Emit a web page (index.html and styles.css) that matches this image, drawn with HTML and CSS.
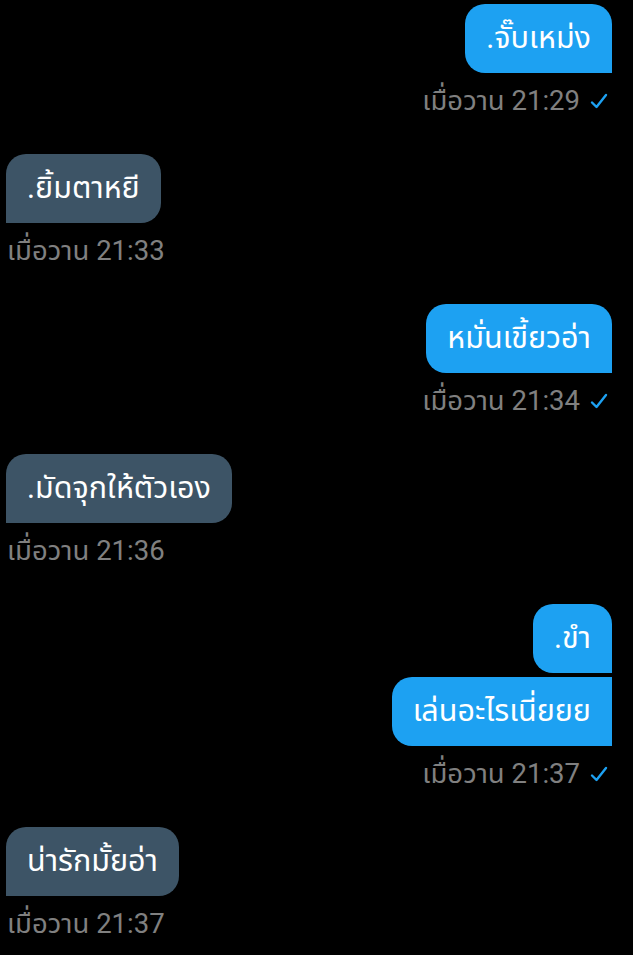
FILE: index.html
```html
<!DOCTYPE html>
<html lang="th">
<head>
<meta charset="utf-8">
<link rel="stylesheet" href="styles.css">
</head>
<body>
<div class="chat">
  <div class="group out">
    <div class="bubble last">.จั๊บเหม่ง</div>
    <div class="meta">เมื่อวาน 21:29 <svg class="check" viewBox="0 0 18 18"><path d="M2 10.5 L6.5 15 L16 3" /></svg></div>
  </div>
  <div class="group in">
    <div class="bubble last">.ยิ้มตาหยี</div>
    <div class="meta">เมื่อวาน 21:33</div>
  </div>
  <div class="group out">
    <div class="bubble last">หมั่นเขี้ยวอ่า</div>
    <div class="meta">เมื่อวาน 21:34 <svg class="check" viewBox="0 0 18 18"><path d="M2 10.5 L6.5 15 L16 3" /></svg></div>
  </div>
  <div class="group in">
    <div class="bubble last">.มัดจุกให้ตัวเอง</div>
    <div class="meta">เมื่อวาน 21:36</div>
  </div>
  <div class="group out">
    <div class="bubble first">.ขำ</div>
    <div class="bubble mid">เล่นอะไรเนี่ยยย</div>
    <div class="meta">เมื่อวาน 21:37 <svg class="check" viewBox="0 0 18 18"><path d="M2 10.5 L6.5 15 L16 3" /></svg></div>
  </div>
  <div class="group in">
    <div class="bubble last">น่ารักมั้ยอ่า</div>
    <div class="meta">เมื่อวาน 21:37</div>
  </div>
</div>
</body>
</html>
```

FILE: styles.css
```css
html, body {
  margin: 0;
  padding: 0;
  background: #000;
}
body {
  font-family: Roboto, "Noto Sans Thai", sans-serif;
  width: 633px;
  height: 955px;
  overflow: hidden;
}
.chat {
  display: flex;
  flex-direction: column;
  padding: 4px 21px 0 6px;
  gap: 39px;
}
.group {
  display: flex;
  flex-direction: column;
  gap: 4px;
}
.group.out { align-items: flex-end; }
.group.in { align-items: flex-start; }
.bubble {
  height: 69px;
  box-sizing: border-box;
  padding: 0 21px;
  display: flex;
  align-items: center;
  font-size: 30.5px;
  color: #fff;
  border-radius: 20px;
  white-space: nowrap;
}
.out .bubble { background: #1da1f2; }
.in .bubble { background: #3d5466; }
.out .bubble.last { border-bottom-right-radius: 0; }
.out .bubble.first { border-bottom-right-radius: 0; }
.out .bubble.mid { border-top-right-radius: 0; border-bottom-right-radius: 0; }
.in .bubble.last { border-bottom-left-radius: 0; }
.meta {
  margin-top: 10px;
  height: 28px;
  display: flex;
  align-items: center;
  gap: 10px;
  font-size: 27.5px;
  color: #808080;
  white-space: nowrap;
}
.in .meta { padding-left: 1px; }
.out .meta { padding-right: 4px; }
.check {
  width: 18px;
  height: 18px;
  fill: none;
  stroke: #1da1f2;
  stroke-width: 2.4;
  stroke-linecap: round;
  stroke-linejoin: round;
}
```
